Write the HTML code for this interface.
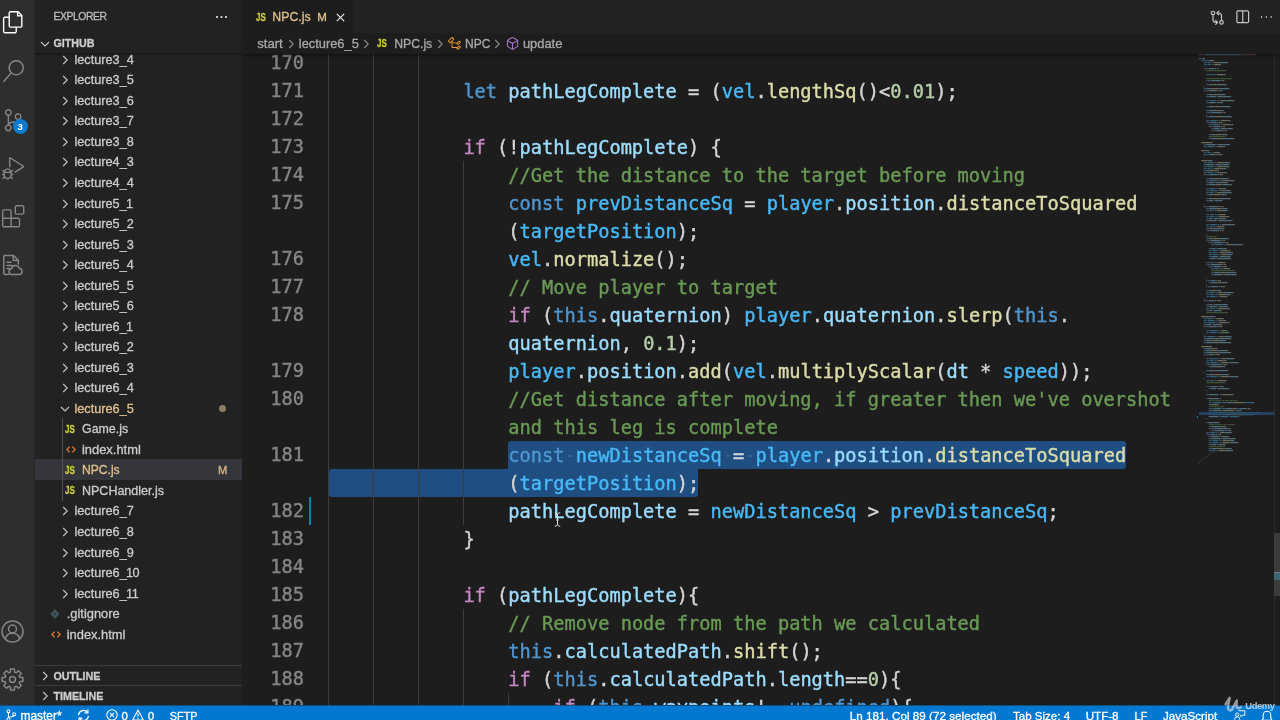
<!DOCTYPE html><html lang="en"><head><meta charset="utf-8"><title>NPC.js - GitHub</title><style>
*{box-sizing:border-box;margin:0;padding:0}
html,body{width:1280px;height:720px;overflow:hidden;background:#1d1d1d}
body{position:relative;font-family:"Liberation Sans",sans-serif;color:#cccccc}
.abs{position:absolute}
#act{left:0;top:0;width:35px;height:705px;background:linear-gradient(90deg,#2e2e2e 0,#2e2e2e 34px,#282828 34px)}
#side{left:35px;top:0;width:207px;height:705px;background:#222223}
#tabs{left:242px;top:0;width:1038px;height:33px;background:#232324}
#tab{left:242px;top:0;width:111px;height:33px;background:#1d1d1d}
#crumbs{left:242px;top:33px;width:1038px;height:21px;background:#1d1d1d;z-index:5;box-shadow:0 2px 3px -1px rgba(0,0,0,.6)}
#status{left:0;top:705px;width:1280px;height:15px;background:linear-gradient(#0f4f80 0,#0f4f80 1px,#0378d0 1px);z-index:9}
.t{position:absolute;white-space:pre;line-height:20px;height:20px;font-size:12.7px;color:#cccccc}
.row{position:absolute;left:35px;width:207px;height:20.5px}
.hd{font-weight:bold;font-size:10.7px;color:#cccccc}
.code{position:absolute;white-space:pre;font-family:"DejaVu Sans Mono","Liberation Mono",monospace;font-size:18.67px;line-height:28px;height:28px;color:#d4d4d4;letter-spacing:0}
.ln{position:absolute;white-space:pre;font-family:"DejaVu Sans Mono","Liberation Mono",monospace;font-size:18.67px;line-height:28px;height:28px;color:#858585;width:60px;text-align:right;left:244px}
.g{position:absolute;width:1px;background:#404040}
.k{color:#5096d0}.c{color:#c586c0}.v{color:#9cdcfe}.K{color:#48b9f6}.f{color:#dcdcaa}.m{color:#6a9955}.n{color:#b5cea8}
.sel{position:absolute;background:#1f4f82;height:28px}
.st{position:absolute;white-space:pre;font-size:11.6px;line-height:14px;height:14px;top:708.5px;color:#ffffff;z-index:10}
.bc{position:absolute;white-space:pre;font-size:12.6px;line-height:20px;height:20px;top:33.5px;color:#a9a9a9;z-index:6}
svg{position:absolute;overflow:visible}
.t,.bc,.st{-webkit-text-stroke:0.3px currentColor}
.code{-webkit-text-stroke:0.42px currentColor}
.ln{-webkit-text-stroke:0.4px currentColor}
</style></head><body>
<div id="wrap" class="abs" style="left:0;top:0;width:1280px;height:720px;will-change:transform">
<div id="act" class="abs"></div><div id="side" class="abs"></div><div id="tabs" class="abs"></div><div id="tab" class="abs"></div><div id="crumbs" class="abs"></div>
<div class="t " style="left:53.5px;top:7.20px;font-size:10.4px;letter-spacing:-0.45px;color:#bbbbbb">EXPLORER</div>
<div class="abs" style="left:215.8px;top:16.1px;width:1.9px;height:1.9px;background:#c5c5c5;box-shadow:4.5px 0 0 #c5c5c5,9px 0 0 #c5c5c5"></div>
<div class="t hd" style="left:53.5px;top:33.20px;">GITHUB</div>
<svg style="left:40.00px;top:39.50px" width="10" height="8" viewBox="0 0 10 8"><path d="M1 2 L5 6 L9 2" fill="none" stroke="#c5c5c5" stroke-width="1.1"/></svg>
<div class="abs" style="left:35px;top:53px;width:207px;height:3px;background:linear-gradient(rgba(0,0,0,.32),rgba(0,0,0,0));z-index:3"></div>
<div class="row" style="top:459.00px;height:21px;background:#35353c"></div>
<svg style="left:60.50px;top:54.80px;" width="8" height="10" viewBox="0 0 8 10"><path d="M2.2 1 L6.2 5 L2.2 9" fill="none" stroke="#c5c5c5" stroke-width="1.1"/></svg>
<div class="t " style="left:74.5px;top:49.80px;">lecture3_4</div>
<svg style="left:60.50px;top:75.33px;" width="8" height="10" viewBox="0 0 8 10"><path d="M2.2 1 L6.2 5 L2.2 9" fill="none" stroke="#c5c5c5" stroke-width="1.1"/></svg>
<div class="t " style="left:74.5px;top:70.33px;">lecture3_5</div>
<svg style="left:60.50px;top:95.86px;" width="8" height="10" viewBox="0 0 8 10"><path d="M2.2 1 L6.2 5 L2.2 9" fill="none" stroke="#c5c5c5" stroke-width="1.1"/></svg>
<div class="t " style="left:74.5px;top:90.86px;">lecture3_6</div>
<svg style="left:60.50px;top:116.39px;" width="8" height="10" viewBox="0 0 8 10"><path d="M2.2 1 L6.2 5 L2.2 9" fill="none" stroke="#c5c5c5" stroke-width="1.1"/></svg>
<div class="t " style="left:74.5px;top:111.39px;">lecture3_7</div>
<svg style="left:60.50px;top:136.92px;" width="8" height="10" viewBox="0 0 8 10"><path d="M2.2 1 L6.2 5 L2.2 9" fill="none" stroke="#c5c5c5" stroke-width="1.1"/></svg>
<div class="t " style="left:74.5px;top:131.92px;">lecture3_8</div>
<svg style="left:60.50px;top:157.45px;" width="8" height="10" viewBox="0 0 8 10"><path d="M2.2 1 L6.2 5 L2.2 9" fill="none" stroke="#c5c5c5" stroke-width="1.1"/></svg>
<div class="t " style="left:74.5px;top:152.45px;">lecture4_3</div>
<svg style="left:60.50px;top:177.98px;" width="8" height="10" viewBox="0 0 8 10"><path d="M2.2 1 L6.2 5 L2.2 9" fill="none" stroke="#c5c5c5" stroke-width="1.1"/></svg>
<div class="t " style="left:74.5px;top:172.98px;">lecture4_4</div>
<svg style="left:60.50px;top:198.51px;" width="8" height="10" viewBox="0 0 8 10"><path d="M2.2 1 L6.2 5 L2.2 9" fill="none" stroke="#c5c5c5" stroke-width="1.1"/></svg>
<div class="t " style="left:74.5px;top:193.51px;">lecture5_<span style="margin:0 -0.7px">1</span></div>
<svg style="left:60.50px;top:219.04px;" width="8" height="10" viewBox="0 0 8 10"><path d="M2.2 1 L6.2 5 L2.2 9" fill="none" stroke="#c5c5c5" stroke-width="1.1"/></svg>
<div class="t " style="left:74.5px;top:214.04px;">lecture5_2</div>
<svg style="left:60.50px;top:239.57px;" width="8" height="10" viewBox="0 0 8 10"><path d="M2.2 1 L6.2 5 L2.2 9" fill="none" stroke="#c5c5c5" stroke-width="1.1"/></svg>
<div class="t " style="left:74.5px;top:234.57px;">lecture5_3</div>
<svg style="left:60.50px;top:260.10px;" width="8" height="10" viewBox="0 0 8 10"><path d="M2.2 1 L6.2 5 L2.2 9" fill="none" stroke="#c5c5c5" stroke-width="1.1"/></svg>
<div class="t " style="left:74.5px;top:255.10px;">lecture5_4</div>
<svg style="left:60.50px;top:280.63px;" width="8" height="10" viewBox="0 0 8 10"><path d="M2.2 1 L6.2 5 L2.2 9" fill="none" stroke="#c5c5c5" stroke-width="1.1"/></svg>
<div class="t " style="left:74.5px;top:275.63px;">lecture5_5</div>
<svg style="left:60.50px;top:301.16px;" width="8" height="10" viewBox="0 0 8 10"><path d="M2.2 1 L6.2 5 L2.2 9" fill="none" stroke="#c5c5c5" stroke-width="1.1"/></svg>
<div class="t " style="left:74.5px;top:296.16px;">lecture5_6</div>
<svg style="left:60.50px;top:321.69px;" width="8" height="10" viewBox="0 0 8 10"><path d="M2.2 1 L6.2 5 L2.2 9" fill="none" stroke="#c5c5c5" stroke-width="1.1"/></svg>
<div class="t " style="left:74.5px;top:316.69px;">lecture6_<span style="margin:0 -0.7px">1</span></div>
<svg style="left:60.50px;top:342.22px;" width="8" height="10" viewBox="0 0 8 10"><path d="M2.2 1 L6.2 5 L2.2 9" fill="none" stroke="#c5c5c5" stroke-width="1.1"/></svg>
<div class="t " style="left:74.5px;top:337.22px;">lecture6_2</div>
<svg style="left:60.50px;top:362.75px;" width="8" height="10" viewBox="0 0 8 10"><path d="M2.2 1 L6.2 5 L2.2 9" fill="none" stroke="#c5c5c5" stroke-width="1.1"/></svg>
<div class="t " style="left:74.5px;top:357.75px;">lecture6_3</div>
<svg style="left:60.50px;top:383.28px;" width="8" height="10" viewBox="0 0 8 10"><path d="M2.2 1 L6.2 5 L2.2 9" fill="none" stroke="#c5c5c5" stroke-width="1.1"/></svg>
<div class="t " style="left:74.5px;top:378.28px;">lecture6_4</div>
<svg style="left:59.50px;top:404.81px" width="10" height="8" viewBox="0 0 10 8"><path d="M1 2 L5 6 L9 2" fill="none" stroke="#c5c5c5" stroke-width="1.1"/></svg>
<div class="t " style="left:74.5px;top:398.81px;color:#e2c08d">lecture6_5</div>
<div class="abs" style="left:219px;top:405.31px;width:7px;height:7px;border-radius:50%;background:#8c7c63"></div>
<div class="abs" style="left:63.00px;top:422.84px;width:14px;height:12px;line-height:12px;font-size:10.9px;font-weight:bold;color:#cbcb41;text-align:center;letter-spacing:0;transform:scaleX(0.74);-webkit-text-stroke:0.3px #cbcb41;">JS</div>
<div class="t " style="left:82px;top:419.34px;;font-size:12.4px">Game.js</div>
<svg style="left:65.50px;top:446.37px" width="10" height="7" viewBox="0 0 10 7"><path d="M3.6 0.6 L0.9 3.5 L3.6 6.4 M6.4 0.6 L9.1 3.5 L6.4 6.4" fill="none" stroke="#e37933" stroke-width="1.3"/></svg>
<div class="t " style="left:82px;top:439.87px;;font-size:12.9px">index.html</div>
<div class="abs" style="left:63.00px;top:463.90px;width:14px;height:12px;line-height:12px;font-size:10.9px;font-weight:bold;color:#cbcb41;text-align:center;letter-spacing:0;transform:scaleX(0.74);-webkit-text-stroke:0.3px #cbcb41;">JS</div>
<div class="t " style="left:82px;top:460.40px;color:#e2c08d;font-size:12.1px">NPC.js</div>
<div class="t " style="left:217.9px;top:459.70px;color:#d9bc8b;font-size:11.2px">M</div>
<div class="abs" style="left:63.00px;top:484.43px;width:14px;height:12px;line-height:12px;font-size:10.9px;font-weight:bold;color:#cbcb41;text-align:center;letter-spacing:0;transform:scaleX(0.74);-webkit-text-stroke:0.3px #cbcb41;">JS</div>
<div class="t " style="left:82px;top:480.93px;;font-size:12.5px">NPCHandler.js</div>
<svg style="left:60.50px;top:506.46px;" width="8" height="10" viewBox="0 0 8 10"><path d="M2.2 1 L6.2 5 L2.2 9" fill="none" stroke="#c5c5c5" stroke-width="1.1"/></svg>
<div class="t " style="left:74.5px;top:501.46px;">lecture6_7</div>
<svg style="left:60.50px;top:526.99px;" width="8" height="10" viewBox="0 0 8 10"><path d="M2.2 1 L6.2 5 L2.2 9" fill="none" stroke="#c5c5c5" stroke-width="1.1"/></svg>
<div class="t " style="left:74.5px;top:521.99px;">lecture6_8</div>
<svg style="left:60.50px;top:547.52px;" width="8" height="10" viewBox="0 0 8 10"><path d="M2.2 1 L6.2 5 L2.2 9" fill="none" stroke="#c5c5c5" stroke-width="1.1"/></svg>
<div class="t " style="left:74.5px;top:542.52px;">lecture6_9</div>
<svg style="left:60.50px;top:568.05px;" width="8" height="10" viewBox="0 0 8 10"><path d="M2.2 1 L6.2 5 L2.2 9" fill="none" stroke="#c5c5c5" stroke-width="1.1"/></svg>
<div class="t " style="left:74.5px;top:563.05px;">lecture6_<span style="margin:0 -0.7px">1</span>0</div>
<svg style="left:60.50px;top:588.58px;" width="8" height="10" viewBox="0 0 8 10"><path d="M2.2 1 L6.2 5 L2.2 9" fill="none" stroke="#c5c5c5" stroke-width="1.1"/></svg>
<div class="t " style="left:74.5px;top:583.58px;">lecture6_<span style="margin:0 -0.7px">1</span><span style="margin:0 -0.7px">1</span></div>
<svg style="left:50.30px;top:609.11px" width="10" height="10" viewBox="0 0 10 10"><path d="M5 0.3 L9.7 5 L5 9.7 L0.3 5 Z" fill="#41535b"/><circle cx="5" cy="5" r="1.2" fill="#2b3a40"/></svg>
<div class="t " style="left:66.7px;top:604.11px;;font-size:12.9px">.gitignore</div>
<svg style="left:50.50px;top:631.14px" width="10" height="7" viewBox="0 0 10 7"><path d="M3.6 0.6 L0.9 3.5 L3.6 6.4 M6.4 0.6 L9.1 3.5 L6.4 6.4" fill="none" stroke="#e37933" stroke-width="1.3"/></svg>
<div class="t " style="left:66.7px;top:624.64px;;font-size:12.9px">index.html</div>
<div class="abs" style="left:62px;top:417.5px;width:1px;height:83.5px;background:#505050"></div>
<div class="abs" style="left:35px;top:664.5px;width:207px;height:1px;background:#3c3c3c"></div>
<div class="abs" style="left:35px;top:685px;width:207px;height:1px;background:#3c3c3c"></div>
<svg style="left:41.00px;top:670.80px;" width="8" height="10" viewBox="0 0 8 10"><path d="M2.2 1 L6.2 5 L2.2 9" fill="none" stroke="#c5c5c5" stroke-width="1.1"/></svg>
<svg style="left:41.00px;top:691.40px;" width="8" height="10" viewBox="0 0 8 10"><path d="M2.2 1 L6.2 5 L2.2 9" fill="none" stroke="#c5c5c5" stroke-width="1.1"/></svg>
<div class="t hd" style="left:53.5px;top:665.80px;">OUTLINE</div>
<div class="t hd" style="left:53.5px;top:686.40px;">TIMELINE</div>
<svg style="left:1.90px;top:11.30px" width="22.4" height="22.4" viewBox="0 0 24 24"><path fill="#ffffff"  d="M17.5 0h-9L7 1.5V6H2.5L1 7.5v15.07L2.5 24h12.07L16 22.57V18h4.7l1.3-1.43V4.5L17.5 0zm0 2.12l2.38 2.38H17.5V2.12zm-3 20.38h-12v-15H7v9.07L8.5 18h6v4.5zm6-6h-12v-15H16V6h4.5v10.5z"/></svg>
<svg style="left:2.20px;top:60.00px" width="22.4" height="22.4" viewBox="0 0 24 24"><path fill="#868686"  d="M15.25 0a8.25 8.25 0 0 0-6.18 13.72L1 22.88l1.12 1 8.05-9.12A8.251 8.251 0 1 0 15.25.01V0zm0 15a6.75 6.75 0 1 1 0-13.5 6.75 6.75 0 0 1 0 13.5z"/></svg>
<svg style="left:1.90px;top:109.00px" width="22.4" height="22.4" viewBox="0 0 24 24"><path fill="#868686"  d="M21.007 8.222A3.738 3.738 0 0 0 15.045 5.2a3.737 3.737 0 0 0 1.156 6.583 2.988 2.988 0 0 1-2.668 1.67h-2.99a4.456 4.456 0 0 0-2.989 1.165V7.4a3.737 3.737 0 1 0-1.494 0v9.117a3.776 3.776 0 1 0 1.816.099 2.99 2.99 0 0 1 2.668-1.667h2.99a4.484 4.484 0 0 0 4.223-3.039 3.736 3.736 0 0 0 3.25-3.687zM4.565 3.738a2.242 2.242 0 1 1 4.484 0 2.242 2.242 0 0 1-4.484 0zm4.484 16.441a2.242 2.242 0 1 1-4.484 0 2.242 2.242 0 0 1 4.484 0zm8.221-9.715a2.242 2.242 0 1 1 0-4.485 2.242 2.242 0 0 1 0 4.485z"/></svg>
<svg style="left:1.60px;top:157.00px" width="22.4" height="22.4" viewBox="0 0 24 24"><path fill="#868686"  d="M10.94 13.5l-1.32 1.32a3.73 3.73 0 0 0-7.24 0L1.06 13.5 0 14.56l1.72 1.72-.22.22V18H0v1.5h1.5v.08c.077.489.214.966.41 1.42L0 22.94 1.06 24l1.65-1.65A4.308 4.308 0 0 0 6 24a4.31 4.31 0 0 0 3.29-1.65L10.94 24 12 22.94 10.09 21c.198-.464.336-.951.41-1.45v-.1H12V18h-1.5v-1.5l-.22-.22L12 14.56l-1.06-1.06zM6 13.5a2.25 2.25 0 0 1 2.25 2.25h-4.5A2.25 2.25 0 0 1 6 13.5zm3 6a3.33 3.33 0 0 1-3 3 3.33 3.33 0 0 1-3-3v-2.25h6v2.25zm14.76-9.9v1.26L13.5 17.37V15.6l8.5-5.37L9 2v9.46a5.07 5.07 0 0 0-1.5-.72V.63L8.64 0l15.12 9.6z"/></svg>
<svg style="left:2.20px;top:205.10px" width="22.4" height="22.4" viewBox="0 0 24 24"><path fill="#868686"  d="M13.5 1.5L15 0h7.5L24 1.5V9l-1.5 1.5H15L13.5 9V1.5zm1.5 0V9h7.5V1.5H15zM0 15V6l1.5-1.5H9L10.5 6v7.5H18l1.5 1.5v7.5L18 24H1.5L0 22.5V15zm9-1.5V6H1.5v7.5H9zM9 15H1.5v7.5H9V15zm1.5 7.5H18V15h-7.5v7.5z"/></svg>
<svg style="left:2px;top:253.8px" width="22" height="22" viewBox="0 0 22 22"><g fill="none" stroke="#868686" stroke-width="1.5" stroke-linejoin="round" stroke-linecap="round">
<path d="M6.5 20.5 H3 A1.2 1.2 0 0 1 1.8 19.3 V2.7 A1.2 1.2 0 0 1 3 1.5 H11.5 L16.3 6.3 V10"/><path d="M11.3 1.8 V6.5 H16"/>
<path d="M5 8.2 H9 M5 11.4 H10 M5 14.6 H7.5"/>
<path d="M9.3 20.5 A2.9 2.9 0 0 1 9.5 14.8 A4 4 0 0 1 17.2 14.2 A3.2 3.2 0 0 1 17.6 20.5 Z" /></g></svg>
<div class="abs" style="left:12.7px;top:119.1px;width:15px;height:15px;border-radius:50%;background:#0a7bd0;color:#fff;font-size:9.5px;font-weight:bold;line-height:15px;text-align:center">3</div>
<svg style="left:1.3px;top:619.7px" width="23" height="23" viewBox="0 0 23 23"><g fill="none" stroke="#868686" stroke-width="1.5">
<circle cx="11.5" cy="11.5" r="10.5"/><circle cx="11.5" cy="9" r="4"/><path d="M4.3 19 A7.4 7.4 0 0 1 18.7 19"/></g></svg>
<svg style="left:1px;top:668.2px" width="23" height="23" viewBox="0 0 23 23"><g fill="none" stroke="#868686" stroke-width="1.5" stroke-linejoin="round">
<path d="M9.45 4.08 L9.50 1.09 L13.50 1.09 L13.55 4.08 L15.30 4.80 L17.44 2.72 L20.28 5.56 L18.20 7.70 L18.92 9.45 L21.91 9.50 L21.91 13.50 L18.92 13.55 L18.20 15.30 L20.28 17.44 L17.44 20.28 L15.30 18.20 L13.55 18.92 L13.50 21.91 L9.50 21.91 L9.45 18.92 L7.70 18.20 L5.56 20.28 L2.72 17.44 L4.80 15.30 L4.08 13.55 L1.09 13.50 L1.09 9.50 L4.08 9.45 L4.80 7.70 L2.72 5.56 L5.56 2.72 L7.70 4.80 Z"/><circle cx="11.5" cy="11.5" r="2.9"/></g></svg>
<div class="abs" style="left:253.50px;top:10.50px;width:14px;height:12px;line-height:12px;font-size:10.9px;font-weight:bold;color:#cbcb41;text-align:center;letter-spacing:0;transform:scaleX(0.74);-webkit-text-stroke:0.3px #cbcb41;z-index:6">JS</div>
<div class="t" style="left:272.3px;top:7px;color:#e2c08d;font-size:12.3px;z-index:6">NPC.js</div>
<div class="t" style="left:317.3px;top:7px;color:#e2c08d;font-size:11.5px;z-index:6">M</div>
<svg style="left:335.5px;top:12.5px;z-index:6" width="9" height="9" viewBox="0 0 9 9"><path d="M0.8 0.8 L8.2 8.2 M8.2 0.8 L0.8 8.2" stroke="#e8e8e8" stroke-width="1.2" fill="none"/></svg>
<svg style="left:1210.4px;top:9.8px" width="15" height="16" viewBox="0 0 15 16"><g fill="none" stroke="#c5c5c5" stroke-width="1.2" stroke-linecap="round" stroke-linejoin="round">
<circle cx="3" cy="3" r="1.75"/><circle cx="11.5" cy="12.4" r="1.75"/>
<path d="M3 4.9 V9.5 A2.9 2.9 0 0 0 5.9 12.4 H7.4 M5.7 10.5 L7.6 12.4 L5.7 14.3"/>
<path d="M11.5 10.5 V5.9 A2.9 2.9 0 0 0 8.6 3 H7.1 M8.8 1.1 L6.9 3 L8.8 4.9"/></g></svg>
<svg style="left:1235.7px;top:9.8px" width="14" height="14" viewBox="0 0 14 14"><g fill="none" stroke="#c5c5c5" stroke-width="1.2" stroke-linejoin="round">
<rect x="0.9" y="0.9" width="11.7" height="11.7" rx="1.2"/><path d="M6.75 0.9 V12.6"/></g></svg>
<div class="abs" style="left:1260.6px;top:16.1px;width:1.8px;height:1.8px;background:#c5c5c5;box-shadow:4.8px 0 0 #c5c5c5,9.6px 0 0 #c5c5c5"></div>
<div class="bc" style="left:257.3px;font-size:13.1px">start</div>
<svg style="left:287.00px;top:38.70px;z-index:6" width="8" height="10" viewBox="0 0 8 10"><path d="M2.2 1 L6.2 5 L2.2 9" fill="none" stroke="#8a8a8a" stroke-width="1.1"/></svg>
<div class="bc" style="left:298.8px;font-size:12.85px">lecture6_5</div>
<svg style="left:362.30px;top:38.70px;z-index:6" width="8" height="10" viewBox="0 0 8 10"><path d="M2.2 1 L6.2 5 L2.2 9" fill="none" stroke="#8a8a8a" stroke-width="1.1"/></svg>
<div class="abs" style="left:375.00px;top:37.20px;width:14px;height:12px;line-height:12px;font-size:10.9px;font-weight:bold;color:#cbcb41;text-align:center;letter-spacing:0;transform:scaleX(0.74);-webkit-text-stroke:0.3px #cbcb41;z-index:6">JS</div>
<div class="bc" style="left:394.3px;font-size:12.2px">NPC.js</div>
<svg style="left:435.60px;top:38.70px;z-index:6" width="8" height="10" viewBox="0 0 8 10"><path d="M2.2 1 L6.2 5 L2.2 9" fill="none" stroke="#8a8a8a" stroke-width="1.1"/></svg>
<svg style="left:446.9px;top:35.7px;z-index:6" width="15" height="15" viewBox="0 0 16 16"><path fill="#ee9d28" d="M11.34 9.71h.71l2.67-2.67v-.71L13.38 5h-.7l-1.82 1.81h-5V5.56l1.86-1.85V3l-2-2H5L1 5v.71l2 2h.71l1.14-1.15v5.79l.5.5H10v.52l1.33 1.34h.71l2.67-2.67v-.71L13.37 10h-.7l-1.86 1.85h-5v-4H10v.48l1.34 1.38zm1.69-3.65l.63.63-2 2-.63-.63 2-2zm0 5l.63.63-2 2-.63-.63 2-2zM3.35 6.65l-1.29-1.3 3.29-3.29 1.3 1.29-3.3 3.3z"/></svg>
<div class="bc" style="left:465px;font-size:12.0px">NPC</div>
<svg style="left:493.40px;top:38.70px;z-index:6" width="8" height="10" viewBox="0 0 8 10"><path d="M2.2 1 L6.2 5 L2.2 9" fill="none" stroke="#8a8a8a" stroke-width="1.1"/></svg>
<svg style="left:505.3px;top:35.9px;z-index:6" width="15" height="15" viewBox="0 0 16 16"><path fill="#b180d7" d="M13.51 4l-5-3h-1l-5 3-.49.86v6l.49.85 5 3h1l5-3 .49-.85v-6L13.51 4zm-6 9.56l-4.5-2.7V5.7l4.5 2.45v5.41zM3.27 4.7l4.74-2.84 4.74 2.84-4.74 2.59L3.27 4.7zm9.74 6.16l-4.5 2.7V8.15l4.5-2.45v5.16z"/></svg>
<div class="bc" style="left:522.9px;font-size:12.9px">update</div>
<div class="sel" style="left:508.3px;top:441px;width:617.8px;border-radius:3px 3px 3px 0"></div>
<div class="sel" style="left:328.5px;top:469px;width:369.8px;border-radius:3px 0 3px 3px"></div>
<div class="abs" style="left:569.2px;top:454.5px;width:2px;height:2px;background:#4a6b8c"></div>
<div class="abs" style="left:726.5px;top:454.5px;width:2px;height:2px;background:#4a6b8c"></div>
<div class="abs" style="left:749.0px;top:454.5px;width:2px;height:2px;background:#4a6b8c"></div>
<div class="g" style="left:328px;top:49px;height:671px;background:#3d3d3d"></div>
<div class="g" style="left:373px;top:49px;height:671px;background:#3d3d3d"></div>
<div class="g" style="left:418px;top:49px;height:671px;background:#3d3d3d"></div>
<div class="g" style="left:463px;top:161px;height:364px;background:#3d3d3d"></div>
<div class="g" style="left:463px;top:609px;height:111px;background:#3d3d3d"></div>
<div class="g" style="left:508px;top:693px;height:27px;background:#3d3d3d"></div>
<div class="abs" style="left:308.6px;top:497px;width:2.9px;height:28px;background:#127fa3"></div>
<div class="ln" style="top:49.4px">170</div>
<div class="ln" style="top:77.4px">171</div>
<div class="code" style="left:463.38px;top:77.8px"><span class="k">let</span> <span class="v">pathLegComplete</span> = (<span class="K">vel</span>.<span class="f">lengthSq</span>()&lt;<span class="n">0.01</span>);</div>
<div class="ln" style="top:105.4px">172</div>
<div class="ln" style="top:133.4px">173</div>
<div class="code" style="left:463.38px;top:133.8px"><span class="c">if</span> (!<span class="v">pathLegComplete</span>) {</div>
<div class="ln" style="top:161.4px">174</div>
<div class="code" style="left:508.34px;top:161.8px"><span class="m">//Get the distance to the target before moving</span></div>
<div class="ln" style="top:189.4px">175</div>
<div class="code" style="left:508.34px;top:189.8px"><span class="k">const</span> <span class="K">prevDistanceSq</span> = <span class="K">player</span>.<span class="v">position</span>.<span class="f">distanceToSquared</span></div>
<div class="code" style="left:508.34px;top:217.8px">(<span class="K">targetPosition</span>);</div>
<div class="ln" style="top:245.4px">176</div>
<div class="code" style="left:508.34px;top:245.8px"><span class="K">vel</span>.<span class="f">normalize</span>();</div>
<div class="ln" style="top:273.4px">177</div>
<div class="code" style="left:508.34px;top:273.8px"><span class="m">// Move player to target</span></div>
<div class="ln" style="top:301.4px">178</div>
<div class="code" style="left:508.34px;top:301.8px"><span class="c">if</span> (<span class="k">this</span>.<span class="v">quaternion</span>) <span class="K">player</span>.<span class="v">quaternion</span>.<span class="f">slerp</span>(<span class="k">this</span>.</div>
<div class="code" style="left:508.34px;top:329.8px"><span class="v">quaternion</span>, <span class="n">0.1</span>);</div>
<div class="ln" style="top:357.4px">179</div>
<div class="code" style="left:508.34px;top:357.8px"><span class="K">player</span>.<span class="v">position</span>.<span class="f">add</span>(<span class="K">vel</span>.<span class="f">multiplyScalar</span>(<span class="v">dt</span> * <span class="K">speed</span>));</div>
<div class="ln" style="top:385.4px">180</div>
<div class="code" style="left:508.34px;top:385.8px"><span class="m">//Get distance after moving, if greater then we&#x27;ve overshot</span></div>
<div class="code" style="left:508.34px;top:413.8px"><span class="m">and this leg is complete</span></div>
<div class="ln" style="top:441.4px">181</div>
<div class="code" style="left:508.34px;top:441.8px"><span class="k">const</span> <span class="K">newDistanceSq</span> = <span class="K">player</span>.<span class="v">position</span>.<span class="f">distanceToSquared</span></div>
<div class="code" style="left:508.34px;top:469.8px">(<span class="K">targetPosition</span>);</div>
<div class="ln" style="top:497.4px">182</div>
<div class="code" style="left:508.34px;top:497.8px"><span class="v">pathLegComplete</span> = <span class="K">newDistanceSq</span> &gt; <span class="K">prevDistanceSq</span>;</div>
<div class="ln" style="top:525.4px">183</div>
<div class="code" style="left:463.38px;top:525.8px">}</div>
<div class="ln" style="top:553.4px">184</div>
<div class="ln" style="top:581.4px">185</div>
<div class="code" style="left:463.38px;top:581.8px"><span class="c">if</span> (<span class="v">pathLegComplete</span>){</div>
<div class="ln" style="top:609.4px">186</div>
<div class="code" style="left:508.34px;top:609.8px"><span class="m">// Remove node from the path we calculated</span></div>
<div class="ln" style="top:637.4px">187</div>
<div class="code" style="left:508.34px;top:637.8px"><span class="k">this</span>.<span class="v">calculatedPath</span>.<span class="f">shift</span>();</div>
<div class="ln" style="top:665.4px">188</div>
<div class="code" style="left:508.34px;top:665.8px"><span class="c">if</span> (<span class="k">this</span>.<span class="v">calculatedPath</span>.<span class="v">length</span>==<span class="n">0</span>){</div>
<div class="ln" style="top:693.4px">189</div>
<div class="code" style="left:553.30px;top:693.8px"><span class="c">if</span> (<span class="k">this</span>.<span class="v">waypoints</span>!==<span class="k">undefined</span>){</div>
<svg style="left:553.5px;top:512px;z-index:4" width="7" height="15" viewBox="0 0 7 15"><path d="M0.8 0.8 C2.5 0.8 3.5 1.6 3.5 3 C3.5 1.6 4.5 0.8 6.2 0.8 M3.5 3 V12 M0.8 14.2 C2.5 14.2 3.5 13.4 3.5 12 C3.5 13.4 4.5 14.2 6.2 14.2 M2.2 8 H4.8" fill="none" stroke="#e0e0e0" stroke-width="1"/></svg>
<svg style="left:0;top:0" width="1280" height="720" viewBox="0 0 1280 720"><g fill="none" stroke-width="1.25" opacity="0.42">
<path stroke="#c586c0" d="M1198.7 54.5H1202.5M1242.5 54.5H1245.0M1203.7 68.5H1205.0M1206.2 80.5H1207.5M1203.7 90.5H1205.0M1206.2 112.5H1207.5M1206.2 122.5H1207.5M1208.7 126.5H1210.0M1211.2 130.5H1212.5M1203.7 154.5H1205.0M1203.7 174.5H1205.0M1203.7 206.5H1205.0M1206.2 230.5H1207.5M1206.2 240.5H1207.5M1208.7 242.5H1210.0M1206.2 264.5H1207.5M1208.7 266.5H1210.0M1206.2 280.5H1207.5M1206.2 286.5H1207.5M1203.7 300.5H1205.0M1203.7 326.5H1205.0M1203.7 354.5H1205.0M1206.2 364.5H1207.5M1206.2 386.5H1207.5M1206.2 398.5H1207.5M1208.7 408.5H1210.0M1206.2 422.5H1207.5M1208.7 428.5H1210.0M1211.2 430.5H1212.5M1206.2 434.5H1207.5"/>
<path stroke="#d4d4d4" d="M1203.1 54.5H1203.7M1241.2 54.5H1241.8M1255.0 54.5H1255.6M1204.3 58.5H1205.0M1208.1 60.5H1208.7M1213.1 60.5H1214.3M1210.6 62.5H1211.2M1218.1 62.5H1218.7M1226.8 62.5H1228.1M1210.6 64.5H1211.2M1219.3 64.5H1220.0M1220.0 64.5H1221.2M1205.6 68.5H1206.2M1208.7 68.5H1209.3M1215.0 68.5H1216.2M1217.5 68.5H1218.7M1213.1 74.5H1213.7M1223.7 74.5H1224.3M1224.3 74.5H1225.6M1208.1 80.5H1208.7M1211.2 80.5H1211.8M1220.6 80.5H1221.8M1223.1 80.5H1224.3M1208.7 84.5H1209.3M1212.5 84.5H1213.1M1216.8 84.5H1217.5M1225.6 84.5H1226.8M1203.7 86.5H1204.3M1206.2 88.5H1206.8M1211.2 88.5H1211.8M1218.1 88.5H1218.7M1228.1 88.5H1229.3M1205.6 90.5H1206.2M1208.7 90.5H1209.3M1217.5 90.5H1218.7M1221.2 90.5H1222.5M1208.7 94.5H1209.3M1213.7 94.5H1214.3M1216.8 94.5H1217.5M1224.3 94.5H1225.6M1208.7 96.5H1209.3M1216.8 96.5H1217.5M1222.5 96.5H1223.1M1230.6 96.5H1231.2M1216.8 100.5H1217.5M1225.0 100.5H1225.6M1233.1 100.5H1234.3M1208.7 102.5H1209.3M1216.2 102.5H1216.8M1219.3 102.5H1220.0M1222.5 102.5H1223.1M1208.7 106.5H1209.3M1215.0 106.5H1215.6M1220.6 106.5H1221.2M1229.3 106.5H1230.6M1208.7 110.5H1209.3M1216.2 110.5H1216.8M1219.3 110.5H1220.0M1222.5 110.5H1223.7M1208.1 112.5H1208.7M1211.2 112.5H1211.8M1221.8 112.5H1223.1M1224.3 112.5H1225.6M1206.2 114.5H1206.8M1208.7 116.5H1209.3M1216.2 116.5H1216.8M1221.2 116.5H1221.8M1230.6 116.5H1231.8M1217.5 120.5H1218.1M1227.5 120.5H1228.1M1229.3 120.5H1230.6M1208.1 122.5H1208.7M1211.2 122.5H1211.8M1217.5 122.5H1218.7M1221.2 122.5H1222.5M1219.3 124.5H1220.0M1230.6 124.5H1231.2M1231.8 124.5H1233.1M1210.6 126.5H1211.2M1213.7 126.5H1214.3M1220.6 126.5H1221.8M1223.7 126.5H1225.0M1213.7 128.5H1214.3M1220.0 128.5H1220.6M1226.8 128.5H1227.5M1232.5 128.5H1233.1M1213.1 130.5H1213.7M1216.2 130.5H1216.8M1222.5 130.5H1223.7M1225.6 130.5H1226.8M1211.2 134.5H1211.8M1214.3 134.5H1215.0M1221.2 134.5H1221.8M1226.2 134.5H1227.5M1211.2 138.5H1211.8M1217.5 138.5H1218.1M1221.2 138.5H1221.8M1233.1 138.5H1234.3M1210.6 142.5H1211.2M1211.2 142.5H1212.5M1206.2 144.5H1206.8M1216.2 144.5H1216.8M1223.1 144.5H1223.7M1229.3 144.5H1230.0M1214.3 146.5H1215.0M1221.2 146.5H1221.8M1223.7 146.5H1225.0M1205.6 150.5H1206.2M1208.1 150.5H1209.3M1210.6 152.5H1211.2M1218.1 152.5H1218.7M1218.7 152.5H1220.0M1205.6 154.5H1206.2M1208.7 154.5H1209.3M1216.2 154.5H1217.5M1221.2 154.5H1222.5M1203.7 156.5H1204.3M1206.8 160.5H1207.5M1211.2 160.5H1212.5M1213.7 162.5H1214.3M1223.7 162.5H1224.3M1228.7 162.5H1230.0M1206.2 164.5H1206.8M1214.3 164.5H1215.0M1221.8 164.5H1222.5M1228.7 164.5H1229.3M1213.7 166.5H1214.3M1223.1 166.5H1223.7M1228.1 166.5H1229.3M1210.6 168.5H1211.2M1219.3 168.5H1220.0M1225.0 168.5H1226.2M1206.2 170.5H1206.8M1209.3 170.5H1210.0M1214.3 170.5H1215.0M1217.5 170.5H1218.7M1213.7 172.5H1214.3M1221.8 172.5H1222.5M1225.6 172.5H1226.8M1205.6 174.5H1206.2M1208.7 174.5H1209.3M1218.1 174.5H1219.3M1221.8 174.5H1223.1M1208.7 178.5H1209.3M1213.7 178.5H1214.3M1218.1 178.5H1218.7M1227.5 178.5H1228.7M1218.1 180.5H1218.7M1229.3 180.5H1230.0M1233.1 180.5H1234.3M1208.7 182.5H1209.3M1215.0 182.5H1215.6M1222.5 182.5H1223.1M1227.5 182.5H1228.1M1208.7 184.5H1209.3M1215.0 184.5H1215.6M1221.8 184.5H1222.5M1230.6 184.5H1231.8M1215.0 188.5H1215.6M1222.5 188.5H1223.1M1225.0 188.5H1226.2M1217.5 190.5H1218.1M1224.3 190.5H1225.0M1229.3 190.5H1230.6M1213.7 192.5H1214.3M1221.2 192.5H1221.8M1230.6 192.5H1231.8M1208.7 194.5H1209.3M1213.7 194.5H1214.3M1220.6 194.5H1221.2M1225.6 194.5H1226.8M1208.7 198.5H1209.3M1212.5 198.5H1213.1M1218.7 198.5H1219.3M1229.3 198.5H1230.6M1208.7 200.5H1209.3M1213.7 200.5H1214.3M1218.1 200.5H1218.7M1221.8 200.5H1222.5M1203.7 204.5H1204.3M1205.6 206.5H1206.2M1208.7 206.5H1209.3M1219.3 206.5H1220.6M1222.5 206.5H1223.7M1208.7 208.5H1209.3M1216.2 208.5H1216.8M1221.8 208.5H1222.5M1226.2 208.5H1227.5M1213.1 210.5H1213.7M1220.6 210.5H1221.2M1226.2 210.5H1227.5M1215.0 214.5H1215.6M1223.7 214.5H1224.3M1224.3 214.5H1225.6M1215.0 216.5H1215.6M1225.0 216.5H1225.6M1228.1 216.5H1229.3M1208.7 218.5H1209.3M1212.5 218.5H1213.1M1218.7 218.5H1219.3M1225.6 218.5H1226.2M1208.7 220.5H1209.3M1217.5 220.5H1218.1M1224.3 220.5H1225.0M1231.8 220.5H1232.5M1218.1 224.5H1218.7M1225.0 224.5H1225.6M1233.7 224.5H1235.0M1213.1 226.5H1213.7M1221.2 226.5H1221.8M1223.1 226.5H1224.3M1208.7 228.5H1209.3M1212.5 228.5H1213.1M1215.0 228.5H1215.6M1223.1 228.5H1224.3M1208.1 230.5H1208.7M1211.2 230.5H1211.8M1220.0 230.5H1221.2M1222.5 230.5H1223.7M1206.2 234.5H1206.8M1208.7 238.5H1209.3M1212.5 238.5H1213.1M1219.3 238.5H1220.0M1227.5 238.5H1228.7M1208.1 240.5H1208.7M1211.2 240.5H1211.8M1220.6 240.5H1221.8M1223.7 240.5H1225.0M1210.6 242.5H1211.2M1213.7 242.5H1214.3M1223.1 242.5H1224.3M1227.5 242.5H1228.7M1223.1 244.5H1223.7M1232.5 244.5H1233.1M1241.8 244.5H1243.1M1211.2 248.5H1211.8M1216.2 248.5H1216.8M1223.1 248.5H1223.7M1226.2 248.5H1226.8M1217.5 250.5H1218.1M1228.1 250.5H1228.7M1229.3 250.5H1230.6M1216.2 252.5H1216.8M1224.3 252.5H1225.0M1231.8 252.5H1233.1M1218.1 254.5H1218.7M1226.2 254.5H1226.8M1231.2 254.5H1232.5M1211.2 256.5H1211.8M1218.7 256.5H1219.3M1226.2 256.5H1226.8M1230.0 256.5H1230.6M1211.2 258.5H1211.8M1216.2 258.5H1216.8M1223.1 258.5H1223.7M1230.6 258.5H1231.2M1213.7 262.5H1214.3M1223.7 262.5H1224.3M1224.3 262.5H1225.6M1208.1 264.5H1208.7M1211.2 264.5H1211.8M1222.5 264.5H1223.7M1225.0 264.5H1226.2M1210.6 266.5H1211.2M1213.7 266.5H1214.3M1220.6 266.5H1221.8M1225.6 266.5H1226.8M1220.0 268.5H1220.6M1227.5 268.5H1228.1M1228.7 268.5H1230.0M1213.7 272.5H1214.3M1220.6 272.5H1221.2M1225.6 272.5H1226.2M1235.0 272.5H1236.2M1213.7 274.5H1214.3M1223.1 274.5H1223.7M1230.6 274.5H1231.2M1236.2 274.5H1236.8M1206.2 278.5H1206.8M1208.1 280.5H1208.7M1211.2 280.5H1211.8M1216.2 280.5H1217.5M1220.0 280.5H1221.2M1211.2 282.5H1211.8M1216.8 282.5H1217.5M1220.0 282.5H1220.6M1226.2 282.5H1227.5M1206.2 284.5H1206.8M1208.1 286.5H1208.7M1211.2 286.5H1211.8M1218.7 286.5H1220.0M1223.7 286.5H1225.0M1208.7 290.5H1209.3M1211.8 290.5H1212.5M1216.2 290.5H1216.8M1220.0 290.5H1221.2M1214.3 292.5H1215.0M1223.1 292.5H1223.7M1232.5 292.5H1233.7M1215.0 294.5H1215.6M1224.3 294.5H1225.0M1229.3 294.5H1230.6M1216.2 296.5H1216.8M1223.1 296.5H1223.7M1226.2 296.5H1227.5M1203.7 298.5H1204.3M1205.6 300.5H1206.2M1208.7 300.5H1209.3M1215.0 300.5H1216.2M1220.0 300.5H1221.2M1208.7 304.5H1209.3M1213.1 304.5H1213.7M1220.0 304.5H1220.6M1226.8 304.5H1227.5M1208.7 306.5H1209.3M1217.5 306.5H1218.1M1223.1 306.5H1223.7M1227.5 306.5H1228.1M1214.3 308.5H1215.0M1225.0 308.5H1225.6M1228.7 308.5H1230.0M1208.7 310.5H1209.3M1212.5 310.5H1213.1M1216.2 310.5H1216.8M1221.2 310.5H1221.8M1208.7 316.5H1209.3M1214.3 316.5H1215.6M1212.5 318.5H1213.1M1221.8 318.5H1222.5M1222.5 318.5H1223.7M1215.0 320.5H1215.6M1221.8 320.5H1222.5M1225.0 320.5H1226.2M1215.6 322.5H1216.2M1225.6 322.5H1226.2M1228.1 322.5H1229.3M1206.2 324.5H1206.8M1211.8 324.5H1212.5M1218.1 324.5H1218.7M1221.8 324.5H1222.5M1205.6 326.5H1206.2M1208.7 326.5H1209.3M1217.5 326.5H1218.7M1221.2 326.5H1222.5M1218.1 330.5H1218.7M1225.0 330.5H1225.6M1226.2 330.5H1227.5M1216.8 332.5H1217.5M1223.7 332.5H1224.3M1228.1 332.5H1229.3M1203.7 334.5H1204.3M1215.6 336.5H1216.2M1223.7 336.5H1224.3M1230.6 336.5H1231.8M1206.2 338.5H1206.8M1213.1 338.5H1213.7M1218.7 338.5H1219.3M1230.0 338.5H1231.2M1206.2 340.5H1206.8M1210.6 340.5H1211.2M1213.1 340.5H1213.7M1225.0 340.5H1226.2M1206.2 342.5H1206.8M1214.3 342.5H1215.0M1218.1 342.5H1218.7M1230.0 342.5H1231.2M1210.0 346.5H1210.6M1210.6 346.5H1211.8M1206.2 348.5H1206.8M1211.2 348.5H1211.8M1214.3 348.5H1215.0M1216.2 348.5H1217.5M1206.2 350.5H1206.8M1210.0 350.5H1210.6M1216.2 350.5H1216.8M1226.8 350.5H1228.1M1206.2 352.5H1206.8M1214.3 352.5H1215.0M1218.7 352.5H1219.3M1230.0 352.5H1231.2M1205.6 354.5H1206.2M1208.7 354.5H1209.3M1213.7 354.5H1215.0M1218.7 354.5H1220.0M1218.1 358.5H1218.7M1225.6 358.5H1226.2M1233.1 358.5H1234.3M1213.7 360.5H1214.3M1223.1 360.5H1223.7M1225.6 360.5H1226.8M1217.5 362.5H1218.1M1228.7 362.5H1229.3M1237.5 362.5H1238.7M1208.1 364.5H1208.7M1211.2 364.5H1211.8M1221.8 364.5H1223.1M1225.6 364.5H1226.8M1211.2 366.5H1211.8M1216.2 366.5H1216.8M1219.3 366.5H1220.0M1223.7 366.5H1225.0M1208.7 370.5H1209.3M1213.1 370.5H1213.7M1215.6 370.5H1216.2M1226.8 370.5H1228.1M1203.7 372.5H1204.3M1208.7 374.5H1209.3M1213.7 374.5H1214.3M1220.6 374.5H1221.2M1228.1 374.5H1229.3M1217.5 376.5H1218.1M1228.7 376.5H1229.3M1236.8 376.5H1238.1M1203.7 378.5H1204.3M1213.7 380.5H1214.3M1225.0 380.5H1225.6M1225.6 380.5H1226.8M1208.1 386.5H1208.7M1211.2 386.5H1211.8M1218.1 386.5H1219.3M1222.5 386.5H1223.7M1211.2 388.5H1211.8M1216.8 388.5H1217.5M1220.6 388.5H1221.2M1228.7 388.5H1229.3M1206.2 390.5H1206.8M1218.7 394.5H1219.3M1220.0 394.5H1220.6M1222.5 394.5H1223.1M1228.1 394.5H1230.0M1232.5 394.5H1233.7M1208.1 398.5H1209.3M1218.7 398.5H1219.3M1220.0 398.5H1220.6M1221.8 402.5H1222.5M1226.8 402.5H1227.5M1232.5 402.5H1233.1M1243.7 402.5H1244.3M1253.1 402.5H1254.3M1210.6 404.5H1211.2M1216.8 404.5H1218.7M1210.6 408.5H1211.2M1213.7 408.5H1214.3M1220.6 408.5H1221.2M1225.6 408.5H1226.2M1232.5 408.5H1233.1M1236.2 408.5H1236.8M1239.3 408.5H1240.0M1246.2 408.5H1246.8M1249.3 408.5H1250.6M1212.5 410.5H1213.1M1218.1 410.5H1218.7M1220.6 410.5H1221.2M1223.1 410.5H1223.7M1232.5 410.5H1233.1M1235.0 410.5H1235.6M1239.3 410.5H1241.2M1221.2 414.5H1221.8M1226.2 414.5H1226.8M1231.8 414.5H1232.5M1243.1 414.5H1243.7M1252.5 414.5H1253.7M1218.7 416.5H1219.3M1228.7 416.5H1229.3M1238.7 416.5H1239.3M1206.2 418.5H1206.8M1208.1 422.5H1208.7M1218.1 422.5H1219.3M1211.2 426.5H1211.8M1220.6 426.5H1221.2M1224.3 426.5H1226.2M1210.6 428.5H1211.2M1213.7 428.5H1214.3M1223.1 428.5H1223.7M1227.5 428.5H1228.7M1229.3 428.5H1230.6M1213.1 430.5H1213.7M1216.2 430.5H1216.8M1222.5 430.5H1224.3M1230.0 430.5H1231.2M1216.2 432.5H1216.8M1224.3 432.5H1225.0M1230.6 432.5H1231.8M1208.1 434.5H1208.7M1211.2 434.5H1211.8M1216.2 434.5H1217.5M1220.0 434.5H1221.2M1211.2 436.5H1211.8M1219.3 436.5H1220.0M1226.2 436.5H1226.8M1228.7 436.5H1229.3M1211.2 438.5H1211.8M1221.2 438.5H1221.8M1228.7 438.5H1229.3M1235.0 438.5H1235.6M1218.7 440.5H1219.3M1229.3 440.5H1230.0M1233.1 440.5H1234.3M1218.7 442.5H1219.3M1228.7 442.5H1229.3M1237.5 442.5H1238.7M1211.2 444.5H1211.8M1216.8 444.5H1217.5M1220.0 444.5H1220.6M1225.0 444.5H1225.6M1211.2 448.5H1211.8M1217.5 448.5H1218.1M1223.7 448.5H1224.3M1230.6 448.5H1231.8M1215.6 450.5H1216.2M1225.0 450.5H1225.6M1231.8 450.5H1233.1M1211.2 452.5H1211.8M1208.7 454.5H1209.3M1206.2 456.5H1206.8M1203.7 458.5H1204.3M1201.2 460.5H1201.8M1198.7 462.5H1199.3"/>
<path stroke="#9cdcfe" d="M1204.3 54.5H1240.6M1208.7 60.5H1213.1M1218.7 62.5H1226.8M1209.3 68.5H1214.3M1211.8 80.5H1220.0M1209.3 84.5H1212.5M1217.5 84.5H1225.6M1206.8 88.5H1211.2M1218.7 88.5H1228.1M1209.3 90.5H1216.8M1209.3 94.5H1213.7M1217.5 94.5H1224.3M1209.3 96.5H1216.2M1218.1 96.5H1222.5M1223.1 96.5H1230.6M1225.6 100.5H1233.1M1209.3 102.5H1215.6M1217.5 102.5H1219.3M1220.0 102.5H1222.5M1209.3 106.5H1215.0M1221.2 106.5H1229.3M1209.3 110.5H1216.2M1220.0 110.5H1222.5M1211.8 112.5H1221.2M1209.3 116.5H1216.2M1221.8 116.5H1230.6M1228.1 120.5H1229.3M1211.8 122.5H1216.8M1231.2 124.5H1231.8M1214.3 126.5H1220.0M1214.3 128.5H1219.3M1221.2 128.5H1226.8M1227.5 128.5H1232.5M1216.8 130.5H1221.8M1211.8 134.5H1214.3M1221.8 134.5H1226.2M1211.8 138.5H1217.5M1221.8 138.5H1233.1M1206.8 144.5H1215.6M1217.5 144.5H1223.1M1223.7 144.5H1229.3M1221.8 146.5H1223.7M1206.2 150.5H1208.1M1209.3 154.5H1215.6M1207.5 160.5H1211.2M1224.3 162.5H1228.7M1206.8 164.5H1213.7M1215.6 164.5H1221.8M1222.5 164.5H1228.7M1223.7 166.5H1228.1M1220.0 168.5H1225.0M1206.8 170.5H1209.3M1215.0 170.5H1217.5M1222.5 172.5H1225.6M1209.3 174.5H1217.5M1209.3 178.5H1213.7M1218.7 178.5H1227.5M1230.0 180.5H1233.1M1209.3 182.5H1214.3M1216.2 182.5H1222.5M1223.1 182.5H1227.5M1209.3 184.5H1215.0M1222.5 184.5H1230.6M1223.1 188.5H1225.0M1225.0 190.5H1229.3M1221.8 192.5H1230.6M1209.3 194.5H1213.7M1221.2 194.5H1225.6M1209.3 198.5H1212.5M1219.3 198.5H1229.3M1209.3 200.5H1213.1M1215.0 200.5H1218.1M1218.7 200.5H1221.8M1209.3 206.5H1218.7M1209.3 208.5H1216.2M1222.5 208.5H1226.2M1221.2 210.5H1226.2M1225.6 216.5H1228.1M1209.3 218.5H1211.8M1213.7 218.5H1218.7M1219.3 218.5H1225.6M1209.3 220.5H1216.8M1218.7 220.5H1224.3M1225.0 220.5H1231.8M1225.6 224.5H1233.7M1221.8 226.5H1223.1M1209.3 228.5H1212.5M1215.6 228.5H1223.1M1211.8 230.5H1219.3M1209.3 238.5H1212.5M1220.0 238.5H1227.5M1211.8 240.5H1220.0M1214.3 242.5H1222.5M1233.1 244.5H1241.8M1211.8 248.5H1215.6M1217.5 248.5H1223.1M1223.7 248.5H1226.2M1228.7 250.5H1229.3M1225.0 252.5H1231.8M1226.8 254.5H1231.2M1211.8 256.5H1218.1M1220.0 256.5H1226.2M1226.8 256.5H1230.0M1211.8 258.5H1215.6M1217.5 258.5H1223.1M1223.7 258.5H1230.6M1211.8 264.5H1221.8M1214.3 266.5H1220.0M1228.1 268.5H1228.7M1214.3 272.5H1220.6M1226.2 272.5H1235.0M1214.3 274.5H1222.5M1224.3 274.5H1230.6M1231.2 274.5H1236.2M1211.8 280.5H1215.6M1211.8 282.5H1216.8M1220.6 282.5H1226.2M1211.8 286.5H1218.1M1209.3 290.5H1211.8M1216.8 290.5H1220.0M1223.7 292.5H1232.5M1225.0 294.5H1229.3M1223.7 296.5H1226.2M1209.3 300.5H1214.3M1209.3 304.5H1212.5M1214.3 304.5H1220.0M1220.6 304.5H1226.8M1209.3 306.5H1216.8M1218.7 306.5H1223.1M1223.7 306.5H1227.5M1225.6 308.5H1228.7M1209.3 310.5H1211.8M1213.7 310.5H1216.2M1216.8 310.5H1221.2M1209.3 316.5H1214.3M1222.5 320.5H1225.0M1226.2 322.5H1228.1M1206.8 324.5H1211.2M1213.1 324.5H1218.1M1218.7 324.5H1221.8M1209.3 326.5H1216.8M1225.6 330.5H1226.2M1224.3 332.5H1228.1M1224.3 336.5H1230.6M1206.8 338.5H1213.1M1219.3 338.5H1230.0M1206.8 340.5H1210.6M1213.7 340.5H1225.0M1206.8 342.5H1214.3M1218.7 342.5H1230.0M1206.8 348.5H1211.2M1215.0 348.5H1216.2M1206.8 350.5H1210.0M1216.8 350.5H1226.8M1206.8 352.5H1214.3M1219.3 352.5H1230.0M1209.3 354.5H1213.1M1226.2 358.5H1233.1M1223.7 360.5H1225.6M1229.3 362.5H1237.5M1211.8 364.5H1221.2M1211.8 366.5H1216.2M1220.0 366.5H1223.7M1209.3 370.5H1213.1M1216.2 370.5H1226.8M1209.3 374.5H1213.7M1221.2 374.5H1228.1M1229.3 376.5H1236.8M1211.8 386.5H1217.5M1211.8 388.5H1216.2M1218.1 388.5H1220.6M1221.2 388.5H1228.7M1208.7 394.5H1218.1M1209.3 398.5H1218.7M1227.5 402.5H1232.5M1214.3 408.5H1220.6M1226.2 408.5H1232.5M1240.0 408.5H1246.2M1213.1 410.5H1218.1M1233.1 410.5H1234.3M1226.8 414.5H1231.8M1208.7 416.5H1218.1M1208.7 422.5H1218.1M1211.8 426.5H1220.6M1214.3 428.5H1223.1M1223.7 428.5H1227.5M1216.8 430.5H1222.5M1225.0 432.5H1230.6M1211.8 434.5H1215.6M1211.8 436.5H1218.7M1220.6 436.5H1226.2M1226.8 436.5H1228.7M1211.8 438.5H1220.6M1222.5 438.5H1228.7M1229.3 438.5H1235.0M1230.0 440.5H1233.1M1229.3 442.5H1237.5M1211.8 444.5H1216.2M1218.1 444.5H1220.0M1220.6 444.5H1225.0M1211.8 448.5H1217.5M1224.3 448.5H1230.6M1225.6 450.5H1231.8"/>
<path stroke="#ce9178" d="M1245.6 54.5H1255.0"/>
<path stroke="#569cd6" d="M1198.7 58.5H1201.8M1201.2 60.5H1208.1M1203.7 62.5H1206.8M1211.8 62.5H1213.7M1203.7 64.5H1206.8M1211.8 64.5H1213.7M1206.2 68.5H1208.7M1206.2 74.5H1209.3M1214.3 74.5H1216.2M1208.7 80.5H1211.2M1206.2 84.5H1208.7M1203.7 88.5H1206.2M1206.2 90.5H1208.7M1206.2 94.5H1208.7M1206.2 96.5H1208.7M1206.2 100.5H1209.3M1218.1 100.5H1220.0M1206.2 102.5H1208.7M1206.2 106.5H1208.7M1206.2 110.5H1208.7M1208.7 112.5H1211.2M1206.2 116.5H1208.7M1206.2 120.5H1209.3M1218.7 120.5H1220.6M1208.7 122.5H1211.2M1208.7 124.5H1211.8M1220.6 124.5H1222.5M1211.2 126.5H1213.7M1211.2 128.5H1213.7M1213.7 130.5H1216.2M1208.7 134.5H1211.2M1208.7 138.5H1211.2M1203.7 144.5H1206.2M1203.7 146.5H1206.8M1215.6 146.5H1217.5M1203.7 152.5H1206.8M1211.8 152.5H1213.7M1206.2 154.5H1208.7M1203.7 162.5H1206.8M1215.0 162.5H1216.8M1203.7 164.5H1206.2M1203.7 166.5H1206.8M1215.0 166.5H1216.8M1203.7 168.5H1206.8M1211.8 168.5H1213.7M1203.7 170.5H1206.2M1203.7 172.5H1206.8M1215.0 172.5H1216.8M1206.2 174.5H1208.7M1206.2 178.5H1208.7M1206.2 180.5H1209.3M1219.3 180.5H1221.2M1206.2 182.5H1208.7M1206.2 184.5H1208.7M1206.2 188.5H1209.3M1216.2 188.5H1218.1M1206.2 190.5H1209.3M1218.7 190.5H1220.6M1206.2 192.5H1209.3M1215.0 192.5H1216.8M1206.2 194.5H1208.7M1206.2 198.5H1208.7M1206.2 200.5H1208.7M1206.2 206.5H1208.7M1206.2 208.5H1208.7M1206.2 210.5H1209.3M1214.3 210.5H1216.2M1206.2 214.5H1209.3M1216.2 214.5H1218.1M1206.2 216.5H1209.3M1216.2 216.5H1218.1M1206.2 218.5H1208.7M1206.2 220.5H1208.7M1206.2 224.5H1209.3M1219.3 224.5H1221.2M1206.2 226.5H1209.3M1214.3 226.5H1216.2M1206.2 228.5H1208.7M1208.7 230.5H1211.2M1206.2 238.5H1208.7M1208.7 240.5H1211.2M1211.2 242.5H1213.7M1211.2 244.5H1214.3M1224.3 244.5H1226.2M1208.7 248.5H1211.2M1208.7 250.5H1211.8M1218.7 250.5H1220.6M1208.7 252.5H1211.8M1217.5 252.5H1219.3M1208.7 254.5H1211.8M1219.3 254.5H1221.2M1208.7 256.5H1211.2M1208.7 258.5H1211.2M1206.2 262.5H1209.3M1215.0 262.5H1216.8M1208.7 264.5H1211.2M1211.2 266.5H1213.7M1211.2 268.5H1214.3M1221.2 268.5H1223.1M1211.2 272.5H1213.7M1211.2 274.5H1213.7M1208.7 280.5H1211.2M1208.7 282.5H1211.2M1208.7 286.5H1211.2M1206.2 290.5H1208.7M1206.2 292.5H1209.3M1215.6 292.5H1217.5M1206.2 294.5H1209.3M1216.2 294.5H1218.1M1206.2 296.5H1209.3M1217.5 296.5H1219.3M1206.2 300.5H1208.7M1206.2 304.5H1208.7M1206.2 306.5H1208.7M1206.2 308.5H1209.3M1215.6 308.5H1217.5M1206.2 310.5H1208.7M1203.7 318.5H1206.8M1213.7 318.5H1215.6M1203.7 320.5H1206.8M1216.2 320.5H1218.1M1203.7 322.5H1206.8M1216.8 322.5H1218.7M1203.7 324.5H1206.2M1206.2 326.5H1208.7M1206.2 330.5H1209.3M1219.3 330.5H1221.2M1206.2 332.5H1209.3M1218.1 332.5H1220.0M1203.7 336.5H1206.8M1216.8 336.5H1218.7M1203.7 338.5H1206.2M1203.7 340.5H1206.2M1203.7 342.5H1206.2M1203.7 348.5H1206.2M1203.7 350.5H1206.2M1203.7 352.5H1206.2M1206.2 354.5H1208.7M1206.2 358.5H1209.3M1219.3 358.5H1221.2M1206.2 360.5H1209.3M1215.0 360.5H1216.8M1206.2 362.5H1209.3M1218.7 362.5H1220.6M1208.7 364.5H1211.2M1208.7 366.5H1211.2M1206.2 370.5H1208.7M1206.2 374.5H1208.7M1206.2 376.5H1209.3M1218.7 376.5H1220.6M1206.2 380.5H1209.3M1215.0 380.5H1216.8M1208.7 386.5H1211.2M1208.7 388.5H1211.2M1206.2 394.5H1208.1M1208.7 402.5H1211.8M1211.2 408.5H1213.7M1236.8 408.5H1239.3M1208.7 414.5H1211.8M1208.7 426.5H1211.2M1211.2 428.5H1213.7M1213.7 430.5H1216.2M1224.3 430.5H1230.0M1206.2 432.5H1209.3M1217.5 432.5H1219.3M1208.7 434.5H1211.2M1208.7 436.5H1211.2M1208.7 438.5H1211.2M1208.7 440.5H1211.8M1220.0 440.5H1221.8M1208.7 442.5H1211.8M1220.0 442.5H1221.8M1208.7 444.5H1211.2M1208.7 448.5H1211.2M1208.7 450.5H1211.8M1216.8 450.5H1218.7"/>
<path stroke="#dcdcaa" d="M1202.5 58.5H1204.3M1214.3 62.5H1218.1M1214.3 64.5H1219.3M1216.8 74.5H1223.7M1213.1 84.5H1216.8M1211.8 88.5H1218.1M1214.3 94.5H1216.8M1220.6 100.5H1225.0M1215.6 106.5H1220.6M1216.8 110.5H1219.3M1216.8 116.5H1221.2M1221.2 120.5H1227.5M1223.1 124.5H1230.6M1215.0 134.5H1221.2M1218.1 138.5H1221.2M1201.2 142.5H1210.6M1218.1 146.5H1221.2M1201.2 150.5H1205.6M1214.3 152.5H1218.1M1201.2 160.5H1206.8M1217.5 162.5H1223.7M1217.5 166.5H1223.1M1214.3 168.5H1219.3M1210.0 170.5H1214.3M1217.5 172.5H1221.8M1214.3 178.5H1218.1M1221.8 180.5H1229.3M1215.6 184.5H1221.8M1218.7 188.5H1222.5M1221.2 190.5H1224.3M1217.5 192.5H1221.2M1214.3 194.5H1220.6M1213.1 198.5H1218.7M1216.8 208.5H1221.8M1216.8 210.5H1220.6M1218.7 214.5H1223.7M1218.7 216.5H1225.0M1221.8 224.5H1225.0M1216.8 226.5H1221.2M1213.1 228.5H1215.0M1213.1 238.5H1219.3M1226.8 244.5H1232.5M1221.2 250.5H1228.1M1220.0 252.5H1224.3M1221.8 254.5H1226.2M1217.5 262.5H1223.7M1223.7 268.5H1227.5M1221.2 272.5H1225.6M1217.5 282.5H1220.0M1212.5 290.5H1216.2M1218.1 292.5H1223.1M1218.7 294.5H1224.3M1220.0 296.5H1223.1M1218.1 308.5H1225.0M1201.2 316.5H1208.7M1216.2 318.5H1221.8M1218.7 320.5H1221.8M1219.3 322.5H1225.6M1221.8 330.5H1225.0M1220.6 332.5H1223.7M1219.3 336.5H1223.7M1213.7 338.5H1218.7M1211.2 340.5H1213.1M1215.0 342.5H1218.1M1201.2 346.5H1210.0M1211.8 348.5H1214.3M1210.6 350.5H1216.2M1215.0 352.5H1218.7M1221.8 358.5H1225.6M1217.5 360.5H1223.1M1221.2 362.5H1228.7M1216.8 366.5H1219.3M1213.7 370.5H1215.6M1214.3 374.5H1220.6M1221.2 376.5H1228.7M1217.5 380.5H1225.0M1223.1 394.5H1228.1M1233.1 402.5H1243.7M1211.2 404.5H1216.8M1233.1 408.5H1236.2M1218.7 410.5H1220.6M1223.7 410.5H1232.5M1232.5 414.5H1243.1M1221.2 426.5H1224.3M1220.0 432.5H1224.3M1222.5 440.5H1229.3M1222.5 442.5H1228.7M1218.1 448.5H1223.7M1219.3 450.5H1225.0"/>
<path stroke="#4fc1ff" d="M1207.5 62.5H1210.0M1207.5 64.5H1210.0M1210.0 74.5H1212.5M1210.0 100.5H1216.2M1210.0 120.5H1216.8M1212.5 124.5H1218.7M1207.5 146.5H1213.7M1207.5 152.5H1210.0M1207.5 162.5H1213.1M1207.5 166.5H1213.1M1207.5 168.5H1210.0M1207.5 172.5H1213.1M1210.0 180.5H1217.5M1210.0 188.5H1214.3M1210.0 190.5H1216.8M1210.0 192.5H1213.1M1210.0 210.5H1212.5M1210.0 214.5H1214.3M1210.0 216.5H1214.3M1210.0 224.5H1217.5M1210.0 226.5H1212.5M1215.0 244.5H1222.5M1212.5 250.5H1216.8M1212.5 252.5H1215.6M1212.5 254.5H1217.5M1210.0 262.5H1213.1M1215.0 268.5H1219.3M1210.0 292.5H1213.7M1210.0 294.5H1214.3M1210.0 296.5H1215.6M1210.0 308.5H1213.7M1207.5 318.5H1211.8M1207.5 320.5H1214.3M1207.5 322.5H1215.0M1210.0 330.5H1217.5M1210.0 332.5H1216.2M1207.5 336.5H1215.0M1210.0 358.5H1217.5M1210.0 360.5H1213.1M1210.0 362.5H1216.8M1210.0 376.5H1216.8M1210.0 380.5H1213.1M1220.6 394.5H1222.5M1212.5 402.5H1221.2M1223.1 402.5H1226.8M1244.3 402.5H1253.1M1208.7 404.5H1210.6M1221.8 408.5H1225.6M1208.7 410.5H1212.5M1221.2 410.5H1223.1M1236.2 410.5H1239.3M1212.5 414.5H1220.6M1222.5 414.5H1226.2M1243.7 414.5H1252.5M1220.0 416.5H1228.1M1230.0 416.5H1238.7M1210.0 432.5H1215.6M1212.5 440.5H1218.1M1212.5 442.5H1218.1M1212.5 450.5H1215.0"/>
<path stroke="#b5cea8" d="M1216.8 68.5H1217.5M1222.5 80.5H1223.1M1219.3 90.5H1221.2M1223.7 112.5H1224.3M1219.3 122.5H1221.2M1222.5 126.5H1223.7M1224.3 130.5H1225.6M1218.1 154.5H1221.2M1220.0 174.5H1221.8M1221.2 206.5H1222.5M1221.8 230.5H1222.5M1222.5 240.5H1223.7M1225.0 242.5H1227.5M1224.3 264.5H1225.0M1222.5 266.5H1225.6M1218.1 280.5H1220.0M1220.6 286.5H1223.7M1216.8 300.5H1220.0M1219.3 326.5H1221.2M1215.6 354.5H1218.7M1223.7 364.5H1225.6M1220.0 386.5H1222.5M1230.0 394.5H1232.5M1247.5 408.5H1249.3M1228.7 428.5H1229.3M1218.1 434.5H1220.0"/>
<path stroke="#6a9955" d="M1206.2 70.5H1226.2M1206.2 78.5H1231.8M1208.7 136.5H1225.6M1206.2 236.5H1216.8M1211.2 270.5H1235.0M1206.2 312.5H1228.1M1206.2 382.5H1225.0M1208.7 400.5H1211.8M1212.5 400.5H1214.3M1215.0 400.5H1220.0M1220.6 400.5H1221.8M1222.5 400.5H1224.3M1225.0 400.5H1228.7M1229.3 400.5H1233.1M1233.7 400.5H1237.5M1208.7 406.5H1210.0M1210.6 406.5H1213.1M1213.7 406.5H1217.5M1218.1 406.5H1219.3M1220.0 406.5H1223.7M1208.7 412.5H1211.8M1212.5 412.5H1217.5M1218.1 412.5H1221.2M1221.8 412.5H1226.2M1226.8 412.5H1228.1M1228.7 412.5H1233.1M1233.7 412.5H1236.2M1236.8 412.5H1240.0M1240.6 412.5H1245.6M1245.6 412.5H1247.5M1248.1 412.5H1250.6M1251.2 412.5H1253.1M1253.7 412.5H1255.0M1255.6 412.5H1260.6M1208.7 424.5H1210.0M1210.6 424.5H1214.3M1215.0 424.5H1217.5M1218.1 424.5H1220.6M1221.2 424.5H1223.1M1223.7 424.5H1226.2M1226.8 424.5H1228.1M1228.7 424.5H1235.0M1208.7 446.5H1225.0"/>
</g></svg>
<div class="abs" style="left:1199px;top:412.3px;width:75px;height:3.2px;background:#264f78;opacity:.75"></div>
<div class="abs" style="left:1196.5px;top:415.5px;width:1.5px;height:2.5px;background:#0c7d9d"></div>
<div class="abs" style="left:1273.5px;top:54px;width:1px;height:651px;background:#2b2b2b"></div>
<div class="abs" style="left:1274px;top:533px;width:6px;height:63px;background:#3b3b3b"></div>
<div class="abs" style="left:1274px;top:572px;width:6px;height:8px;background:#3f6572"></div>
<div class="abs" style="left:1274px;top:571.5px;width:6px;height:1.2px;background:#6f7d84"></div>
<div id="status" class="abs"></div>
<svg style="left:5.8px;top:708.6px;z-index:10" width="10.6" height="12.4" viewBox="0 0 12 14"><g fill="none" stroke="#ffffff" stroke-width="1.15">
<circle cx="2.8" cy="2.6" r="1.7"/><circle cx="9.2" cy="6" r="1.7"/><circle cx="2.8" cy="11.6" r="1.7"/><path d="M2.8 4.3 V9.9 M9.2 7.7 C9.2 9.4 2.8 8.4 2.8 9.9"/></g></svg>
<div class="st" style="left:20.6px;font-size:11.9px;;top:709.3px">master*</div>
<svg style="left:76.8px;top:709.3px;z-index:10" width="13" height="13" viewBox="0 0 13 13"><g fill="none" stroke="#ffffff" stroke-width="1.2" stroke-linecap="round">
<path d="M1.6 5.6 A5 5 0 0 1 10.6 3.6 M11.4 7.4 A5 5 0 0 1 2.4 9.4"/><path d="M10.9 0.9 V3.8 H8 M2.1 12.1 V9.2 H5"/></g></svg>
<svg style="left:105.5px;top:709.3px;z-index:10" width="12" height="12" viewBox="0 0 12 12"><g fill="none" stroke="#ffffff" stroke-width="1.05">
<circle cx="6" cy="6" r="5.2"/><path d="M3.9 3.9 L8.1 8.1 M8.1 3.9 L3.9 8.1"/></g></svg>
<div class="st" style="left:121.5px;font-size:11.6px;;top:709.3px">0</div>
<svg style="left:132px;top:709.3px;z-index:10" width="12" height="12" viewBox="0 0 12 12"><g fill="none" stroke="#ffffff" stroke-width="1.05" stroke-linejoin="round">
<path d="M6 0.9 L11.3 10.9 H0.7 Z"/><path d="M6 4.3 V7.8 M6 8.8 V9.9"/></g></svg>
<div class="st" style="left:147.7px;font-size:11.6px;;top:709.3px">0</div>
<div class="st" style="left:169.8px;font-size:10.9px;;top:709.3px">SFTP</div>
<div class="st" style="left:849.8px;font-size:11.7px;">Ln 181, Col 89 (72 selected)</div>
<div class="st" style="left:1013px;font-size:11.55px;">Tab Size: 4</div>
<div class="st" style="left:1085.7px;font-size:11.6px;">UTF-8</div>
<div class="st" style="left:1134.6px;font-size:10.9px;top:708.9px">LF</div>
<div class="st" style="left:1163px;font-size:11.63px;">JavaScript</div>
<svg style="left:1233.8px;top:710px;z-index:10" width="11.5" height="10.6" viewBox="0 0 13 12"><g fill="none" stroke="#ffffff" stroke-width="1.05" stroke-linejoin="round">
<path d="M5.2 0.8 H12.2 V6 H9.6 L8 7.6 V6 H7"/><circle cx="3.6" cy="5.3" r="1.9"/><path d="M0.7 11.8 V10.6 A2.9 2.9 0 0 1 6.5 10.6 V11.8"/></g></svg>
<svg style="left:1260.5px;top:710px;z-index:10" width="12" height="12" viewBox="0 0 12 12"><g fill="none" stroke="#ffffff" stroke-width="1.1" stroke-linejoin="round">
<path d="M1 10.2 H11 L9.8 8.4 V5 A3.8 3.8 0 0 0 2.2 5 V8.4 Z"/></g></svg>
<svg style="left:1210px;top:690px;z-index:11" width="40" height="30" viewBox="0 0 40 30" opacity="0.6"><path d="M15.6 14.2 L19.6 7.9 L18.2 15.4 C17.2 21.6 21.6 22 23.2 17 L26.8 10.6 L26.5 15.6 C26.3 18.6 28.8 18.8 30.8 17.2" fill="none" stroke="#e4e8ea" stroke-width="2.5" stroke-linecap="round" stroke-linejoin="round"/></svg>
<div class="abs" style="left:1245.3px;top:699.8px;z-index:11;font-size:9.4px;font-weight:bold;line-height:12px;color:#ffffff;opacity:.68;letter-spacing:-0.4px">Udemy</div>
</div></body></html>
